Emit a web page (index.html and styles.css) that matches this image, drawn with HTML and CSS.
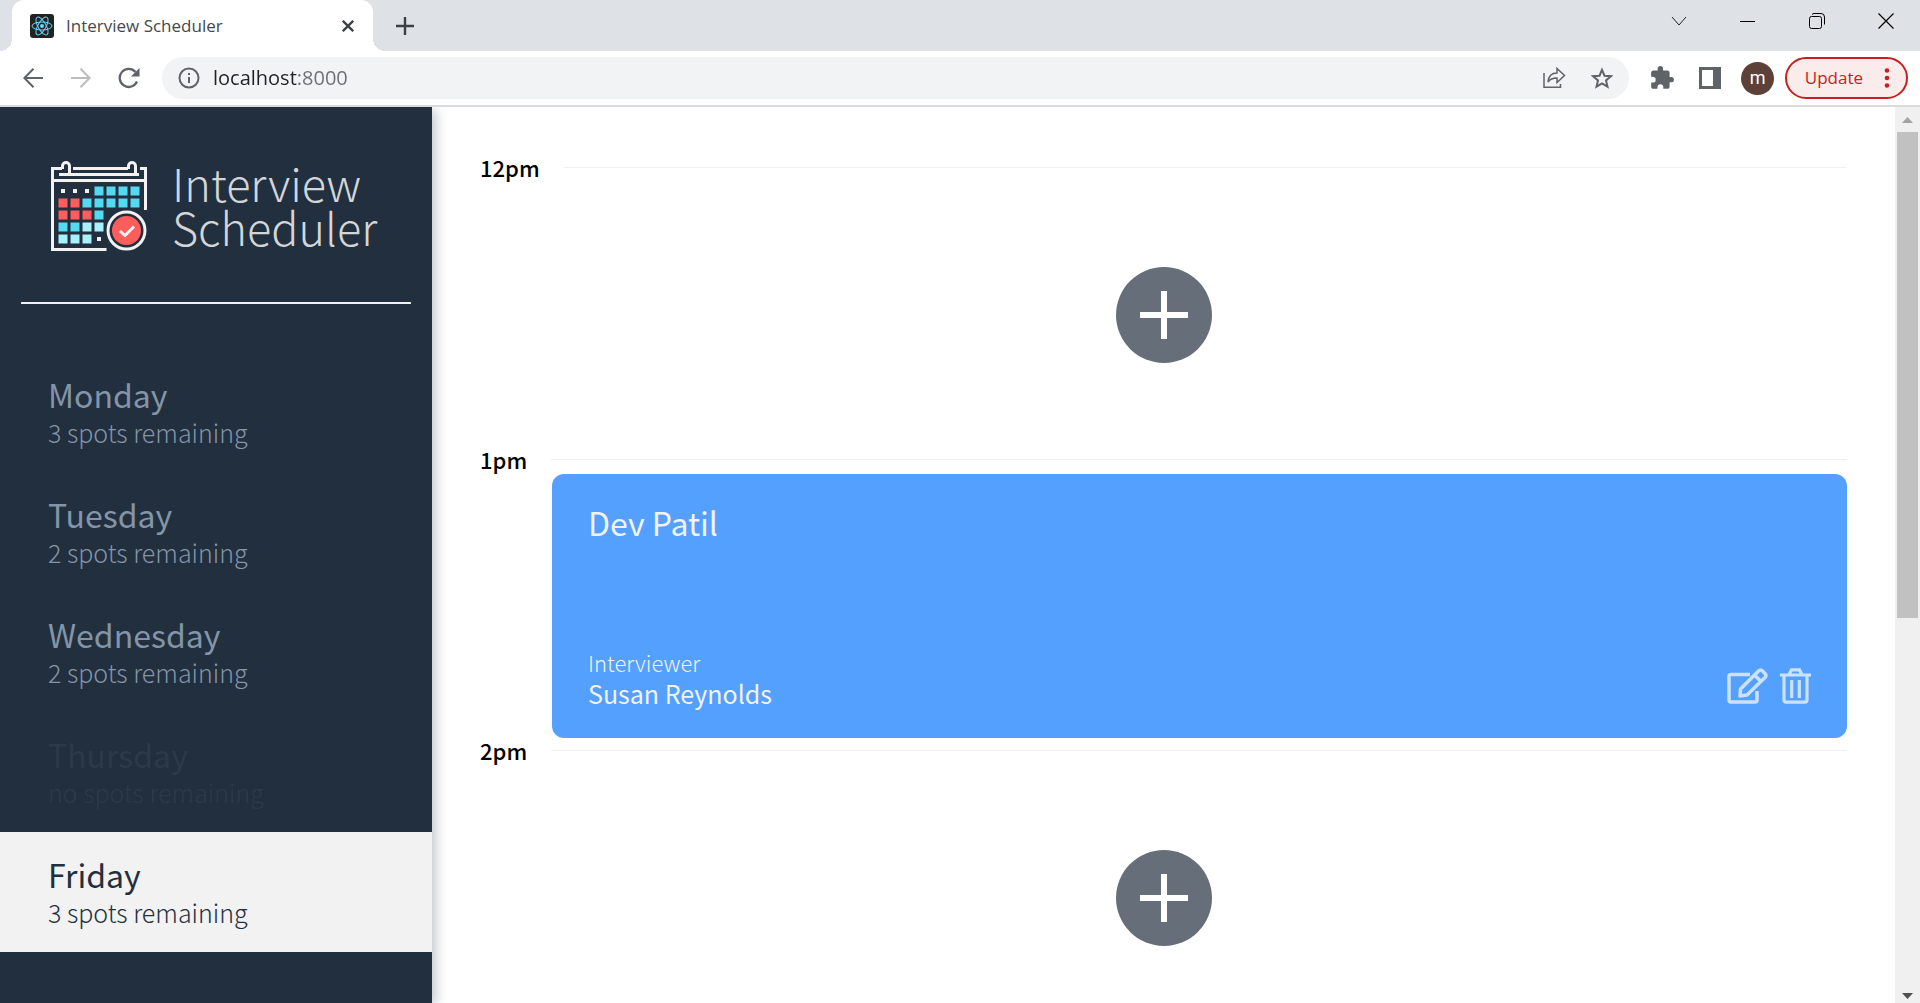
FILE: index.html
```html
<!DOCTYPE html>
<html lang="en">
<head>
<meta charset="utf-8">
<title>Interview Scheduler</title>
<link rel="stylesheet" href="styles.css">
</head>
<body>
<div class="browser">
  <header class="tabstrip">
    <div class="tab">
      <svg class="favicon" width="24" height="24" viewBox="0 0 24 24" fill="none" stroke="#61dafb">
        <rect width="24" height="24" rx="3" fill="#222" stroke="none"/>
        <circle cx="12" cy="12" r="2" fill="#61dafb" stroke="none"/>
        <ellipse cx="12" cy="12" rx="10" ry="4"/>
        <ellipse cx="12" cy="12" rx="10" ry="4" transform="rotate(60 12 12)"/>
        <ellipse cx="12" cy="12" rx="10" ry="4" transform="rotate(120 12 12)"/>
      </svg>
      <span class="tab-title">Interview Scheduler</span>
      <button class="tab-button" aria-label="Close tab">
        <svg width="12" height="12" viewBox="0 0 12 12" stroke="#3c4043" stroke-width="2.3"><path d="M.8.8l10.4 10.4M11.2.8L.8 11.2"/></svg>
      </button>
    </div>
    <button class="tab-button new-tab" aria-label="New tab">
      <svg width="18" height="18" viewBox="0 0 18 18" stroke="#3c4043" stroke-width="2.4"><path d="M9 0v18M0 9h18"/></svg>
    </button>
    <div class="window-controls">
      <button class="window-button" aria-label="Search tabs"><svg width="16" height="16" viewBox="0 0 16 16" fill="none" stroke="#222"><path d="M1 4l7 8 7-8"/></svg></button>
      <button class="window-button" aria-label="Minimize"><svg width="16" height="16" viewBox="0 0 16 16" fill="none" stroke="#000"><path d="M0 8.500h15"/></svg></button>
      <button class="window-button" aria-label="Restore"><svg width="16" height="16" viewBox="0 0 16 16" fill="none" stroke="#000"><rect x=".5" y="3.500" width="12" height="12" rx="2"/><path d="M3 1.500Q4 .5 5 .5h7q3.500 0 3.500 3.500v7.500"/></svg></button>
      <button class="window-button" aria-label="Close"><svg width="16" height="16" viewBox="0 0 16 16" fill="none" stroke="#000" stroke-width="1.200"><path d="M.5.5l15 15M15.500.5l-15 15"/></svg></button>
    </div>
  </header>

  <div class="toolbar">
    <button class="tool" aria-label="Back"><svg width="20" height="20" viewBox="0 0 20 20" fill="none" stroke="#5f6368" stroke-width="2"><path d="M20 10H1.500M10.500.8L1.400 10l9.100 9.200"/></svg></button>
    <button class="tool" aria-label="Forward"><svg width="20" height="20" viewBox="0 0 20 20" fill="none" stroke="#babcbe" stroke-width="2"><path d="M0 10h18.500M9.500.8l9.100 9.200-9.100 9.200"/></svg></button>
    <button class="tool" aria-label="Reload"><svg width="22" height="22" viewBox="0 0 22 22" fill="none" stroke="#5f6368" stroke-width="2.300"><path d="M19 14.500A9 9 0 1 1 17.500 5"/><path d="M21.500 1v8.500H13z" fill="#5f6368" stroke="none"/></svg></button>
    <div class="address">
      <svg width="22" height="22" viewBox="0 0 22 22" fill="none" stroke="#5f6368" stroke-width="2"><circle cx="11" cy="11" r="9.500"/><path d="M11 10v6M11 6v2"/></svg>
      <input class="url" type="text" value="localhost:8000" aria-label="Address">
      <button class="tool" aria-label="Share"><svg width="24" height="24" viewBox="0 0 24 24" fill="none" stroke="#5f6368" stroke-width="1.500"><path d="M2 7v14.200h16.500V18"/><path d="M6 16c.5-6 4-9 9-9V2.500l7.500 7-7.500 7V12c-4 0-7 1-9 4z"/></svg></button>
      <button class="tool" aria-label="Bookmark"><svg width="22" height="22" viewBox="0 0 22 22" fill="none" stroke="#5f6368" stroke-width="2"><path d="M11 2.800l2.500 5.900 6.400.5-4.900 4.200 1.500 6.200-5.500-3.300-5.500 3.300L7 13.400 2.100 9.200l6.400-.5z"/></svg></button>
    </div>
    <button class="tool" aria-label="Extensions"><svg width="26" height="26" viewBox="0 0 24 24" fill="#5f6368"><path d="M20.500 11H19V7c0-1.100-.9-2-2-2h-4V3.500a2.500 2.500 0 0 0-5 0V5H4c-1.100 0-2 .9-2 2v3.800h1.500a2.700 2.700 0 0 1 0 5.400H2V20c0 1.100.9 2 2 2h3.800v-1.500a2.700 2.700 0 0 1 5.400 0V22H17c1.100 0 2-.9 2-2v-4h1.500a2.500 2.500 0 0 0 0-5z"/></svg></button>
    <button class="tool" aria-label="Side panel"><svg width="22" height="22" viewBox="0 0 22 22"><path d="M0 0h22v22H0z" fill="#5f6368"/><path d="M3 3h11v16H3z" fill="#fff"/></svg></button>
    <button class="tool" aria-label="Profile"><span class="avatar">m</span></button>
    <button class="update">Update
      <svg width="6" height="20" viewBox="0 0 6 20" fill="#c5221f"><circle cx="3" cy="2.500" r="2.300"/><circle cx="3" cy="10" r="2.300"/><circle cx="3" cy="17.500" r="2.300"/></svg>
    </button>
  </div>

  <div class="page">
    <aside class="sidebar">
      <div class="logo">
        <svg width="96" height="92" viewBox="0 0 96 92" fill="none">
          <g stroke="#f2f2f2" stroke-width="3">
            <path d="M11 7.500H1.500v81h54M22 7.500h55M89 7.500h5.500V49M1.500 19.500h93M8 13.500h80"/>
            <path d="M11.500 8V5a3.500 3.500 0 0 1 7 0v9M77.500 8V5a3.500 3.500 0 0 1 7 0v9"/>
          </g>
          <path fill="#f2f2f2" d="M10 28h4v4h-4zM22 28h4v4h-4zM34 28h4v4h-4zM46 76h4v4h-4z"/>
          <path fill="#54daf0" d="M43.500 25.500h9v9h-9zM55.500 25.500h9v9h-9zM67.500 25.500h9v9h-9zM79.500 25.500h9v9h-9zM31.500 37.500h9v9h-9zM43.500 37.500h9v9h-9zM55.500 37.500h9v9h-9zM67.500 37.500h9v9h-9zM79.500 37.500h9v9h-9zM43.500 49.500h9v9h-9zM7.500 61.500h9v9h-9zM19.500 61.500h9v9h-9z"/>
          <path fill="#a6f1fb" d="M31.500 61.500h9v9h-9zM43.500 61.500h9v9h-9zM7.500 73.500h9v9h-9zM19.500 73.500h9v9h-9zM31.500 73.500h9v9h-9z"/>
          <path fill="#ff5c5c" d="M7.500 37.500h9v9h-9zM19.500 37.500h9v9h-9zM7.500 49.500h9v9h-9zM19.500 49.500h9v9h-9zM31.500 49.500h9v9h-9z"/>
          <circle cx="75.500" cy="69.500" r="18.500" fill="#222f3e" stroke="#f2f2f2" stroke-width="3"/>
          <circle cx="75.500" cy="69.500" r="14.500" fill="#ff5c5c"/>
          <path d="M69 70l5 4.500 9-9" stroke="#f2f2f2" stroke-width="3"/>
        </svg>
        <div class="logo-text">Interview<br>Scheduler</div>
      </div>
      <hr class="separator">
      <nav>
        <ul class="days">
          <li class="day"><h2 class="day-name">Monday</h2><p class="spots">3 spots remaining</p></li>
          <li class="day"><h2 class="day-name">Tuesday</h2><p class="spots">2 spots remaining</p></li>
          <li class="day"><h2 class="day-name">Wednesday</h2><p class="spots">2 spots remaining</p></li>
          <li class="day day-full"><h2 class="day-name">Thursday</h2><p class="spots">no spots remaining</p></li>
          <li class="day day-selected"><h2 class="day-name">Friday</h2><p class="spots">3 spots remaining</p></li>
        </ul>
      </nav>
    </aside>

    <main class="schedule">
      <article class="slot">
        <header class="slot-header"><h4 class="time">12pm</h4><hr class="rule"></header>
        <div class="empty"><button class="add" aria-label="Add"><svg width="48" height="48" viewBox="0 0 48 48" stroke="#fff" stroke-width="6"><path d="M24 0v48M0 24h48"/></svg></button></div>
      </article>
      <article class="slot">
        <header class="slot-header"><h4 class="time">1pm</h4><hr class="rule"></header>
        <div class="card">
          <h2 class="student">Dev Patil</h2>
          <div class="card-footer">
            <div>
              <h4 class="role">Interviewer</h4>
              <h3 class="interviewer">Susan Reynolds</h3>
            </div>
            <div class="actions">
              <button class="action" aria-label="Edit"><svg width="41" height="36" viewBox="0 0 41 36" fill="none" stroke="#cbe1ff" stroke-width="3.500" stroke-linejoin="round"><path d="M23 6.500H4q-2 0-2 2V32q0 2 2 2h24q2 0 2-2v-9"/><path d="M13.500 21L31.500 3q2-2 4 0l2.500 2.500q2 2 0 4L20 27l-7 1zM27.500 7l6.500 6.500"/></svg></button>
              <button class="action" aria-label="Delete"><svg width="31" height="36" viewBox="0 0 31 36" fill="none" stroke="#cbe1ff" stroke-width="3.200"><path d="M0 7h31M4 7v25q0 2.200 2.200 2.200h18.600q2.200 0 2.200-2.200V7M9 7l2.500-5.200h8L22 7"/><path d="M11.700 12v18M19.300 12v18"/></svg></button>
            </div>
          </div>
        </div>
      </article>
      <article class="slot">
        <header class="slot-header"><h4 class="time">2pm</h4><hr class="rule"></header>
        <div class="empty"><button class="add" aria-label="Add"><svg width="48" height="48" viewBox="0 0 48 48" stroke="#fff" stroke-width="6"><path d="M24 0v48M0 24h48"/></svg></button></div>
      </article>
    </main>

    <div class="scrollbar">
      <svg class="arrow" viewBox="0 0 25 25"><path d="M7 16l5.500-6 5.500 6z" fill="#a3a3a3"/></svg>
      <div class="track"><div class="thumb"></div></div>
      <svg class="arrow" viewBox="0 0 25 25"><path d="M7 15l5.500 6 5.500-6z" fill="#505050"/></svg>
    </div>
  </div>
</div>
</body>
</html>
```
FILE: styles.css
```css
* { box-sizing: border-box; }

body {
  margin: 0;
  font-family: "Noto Sans CJK SC", "Noto Sans CJK JP", sans-serif;
  color: #000;
  background: #fff;
}

h2, h3, h4, p, ul { margin: 0; padding: 0; font-weight: 400; }

button {
  display: flex;
  align-items: center;
  justify-content: center;
  padding: 0;
  border: 0;
  background: none;
  cursor: pointer;
}

.browser {
  display: flex;
  flex-direction: column;
  height: 100vh;
  overflow: hidden;
}

/* Tab strip */
.tabstrip {
  display: flex;
  flex: none;
  height: 51px;
  padding-left: 12px;
  background: #dee1e6;
}

.tab {
  position: relative;
  display: flex;
  align-items: center;
  width: 361px;
  padding: 0 13px 0 18px;
  border-radius: 12px 12px 0 0;
  background: #fff;
}

.tab::before,
.tab::after {
  content: "";
  position: absolute;
  bottom: 0;
  width: 12px;
  height: 12px;
}

.tab::before { right: 100%; background: radial-gradient(circle at 0 0, #dee1e6 12px, #fff 12px); }
.tab::after { left: 100%; background: radial-gradient(circle at 100% 0, #dee1e6 12px, #fff 12px); }

.tab-title {
  flex: 1;
  margin-left: 12px;
  font: 17px/24px "Open Sans", sans-serif;
  color: #45494d;
}

.tab-button { width: 24px; }
.new-tab { margin-left: 20px; }
.window-controls { display: flex; height: 42px; margin-left: auto; }
.window-button { width: 69px; }

/* Toolbar */
.toolbar {
  display: flex;
  flex: none;
  align-items: center;
  height: 56px;
  padding: 0 12px 0 9px;
  border-bottom: 2px solid #dadada;
}

.tool { width: 48px; height: 42px; }

.address {
  display: flex;
  flex: 1;
  align-items: center;
  height: 42px;
  margin: 0 9px;
  padding: 0 3px 0 16px;
  border-radius: 21px;
  background: #f1f3f4;
}

.url {
  flex: 1;
  min-width: 0;
  margin-left: 13px;
  padding: 0;
  border: 0;
  outline: 0;
  font: 20px/28px "Open Sans", sans-serif;
  background: linear-gradient(90deg, #202124 84px, #6b6f74 84px);
  -webkit-background-clip: text;
  background-clip: text;
  -webkit-text-fill-color: transparent;
}

.avatar {
  width: 33px;
  height: 33px;
  border-radius: 50%;
  font: 18px/31px Roboto, sans-serif;
  color: #fff;
  background: #5d4037;
}

.update {
  gap: 21px;
  height: 42px;
  margin-left: 3px;
  padding: 0 16px 0 18px;
  border: 2px solid #c5221f;
  border-radius: 21px;
  font: 17px/24px "Open Sans", sans-serif;
  color: #c5221f;
  background: #faeceb;
}

/* Page */
.page {
  display: flex;
  flex: 1;
  min-height: 0;
  overflow: hidden;
}

.sidebar {
  flex: none;
  width: 432px;
  color: #8395a7;
  background: #222f3e;
  box-shadow: 3px 3px 12px rgba(34, 47, 62, 0.3);
}

.logo {
  display: flex;
  gap: 25px;
  height: 195px;
  padding: 54px 0 0 51px;
}

.logo-text {
  font-size: 45px;
  font-weight: 300;
  line-height: 44px;
  color: #d3d6d9;
}

.separator {
  height: 2px;
  margin: 0 21px 48px;
  border: 0;
  background: #f2f2f2;
}

.days { list-style: none; }

.day {
  height: 120px;
  padding: 22px 48px;
}

.day-name { font-size: 32px; line-height: 40px; }
.spots { font-size: 25px; font-weight: 300; line-height: 36px; }
.day-full { opacity: 0.1; color: #8395a7; }
.day-selected { color: #222f3e; background: #f2f2f2; }

.schedule {
  flex: 1;
  padding: 48px 48px 0;
}

.slot-header {
  display: flex;
  align-items: center;
  gap: 24px;
  height: 27px;
  padding-bottom: 2px;
}

.time { font-size: 22px; font-weight: 500; line-height: 27px; }

.rule {
  flex: 1;
  height: 1px;
  margin: 0;
  border: 0;
  background: #f0f0f0;
}

.empty {
  display: flex;
  justify-content: center;
  height: 265px;
  padding-top: 85px;
}

.add {
  width: 96px;
  height: 96px;
  border-radius: 50%;
  background: #666e7a;
}

.card {
  display: flex;
  flex-direction: column;
  justify-content: space-between;
  height: 264px;
  margin-left: 72px;
  padding: 26px 36px 29px;
  border-radius: 12px;
  color: #f2f2f2;
  background: #54a0ff;
}

.student { font-size: 32px; line-height: 44px; }
.card-footer { display: flex; align-items: flex-end; justify-content: space-between; }
.role { font-size: 22px; font-weight: 300; line-height: 30px; }
.interviewer { font-size: 25px; line-height: 32px; }
.actions { display: flex; gap: 12px; padding-bottom: 5px; }

/* Scrollbar */
.scrollbar {
  display: flex;
  flex: none;
  flex-direction: column;
  width: 25px;
  background: #f0f0f0;
}

.arrow { flex: none; width: 25px; height: 25px; }
.track { flex: 1; padding: 0 2px; }
.thumb { height: calc(57% + 4px); background: #c1c1c1; }
```
